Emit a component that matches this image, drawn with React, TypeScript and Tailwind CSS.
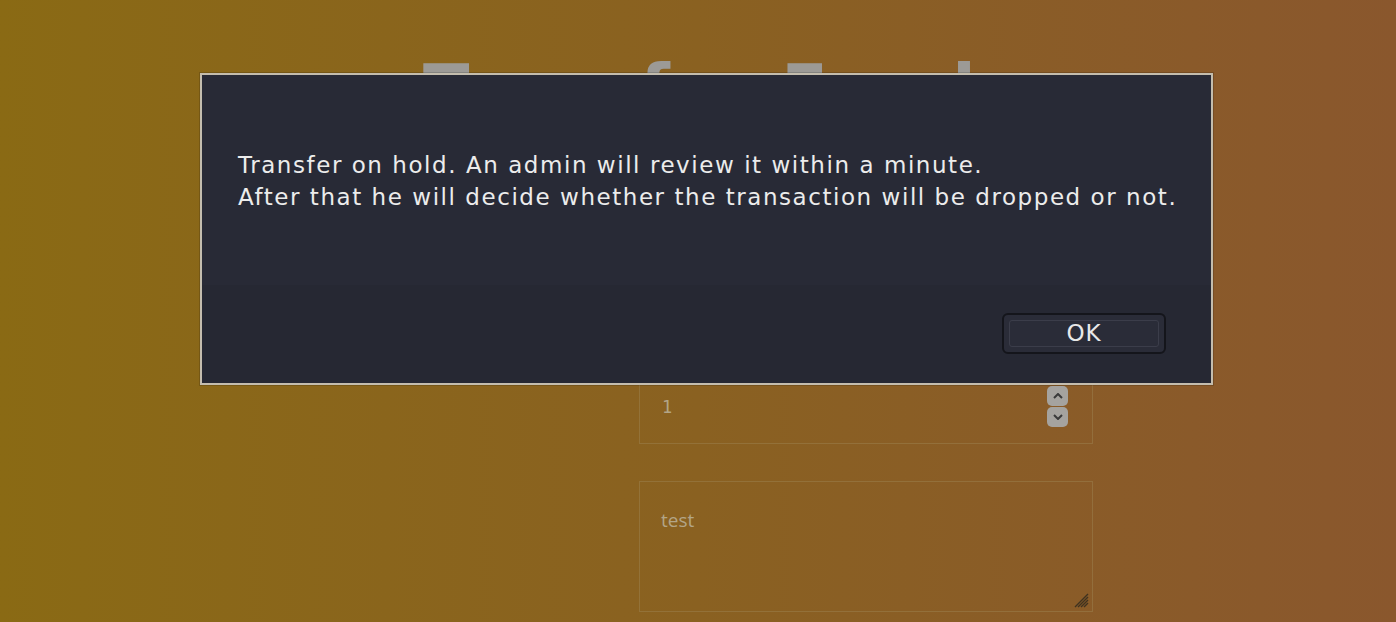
import React from "react";

export default function App() {
  return (
    <div className="relative h-[622px] w-[1396px] overflow-hidden bg-gradient-to-r from-[#8a6a14] via-[#8a6121] to-[#8a572d] font-['DejaVu_Sans',sans-serif]">
      {/* Page behind the dialog */}
      <div className="flex flex-col pt-[50px]">
        <h1 className="pl-[423px] text-[68px] font-bold leading-[80px] tracking-[2px] text-[#9c9a96]">
          Transfer Funds
        </h1>
        <div className="ml-[639px] mt-[254px] flex w-[454px] flex-col gap-[37px]">
          <div className="relative flex h-[60px] items-start border border-[#9c8150]/50 px-[22px] pt-[10px]">
            <span className="font-['DejaVu_Sans_Mono',monospace] text-[17px] text-[#b3a587]">1</span>
            <div className="absolute right-[24px] top-[1px] flex flex-col gap-[1px]">
              <span className="flex h-[20px] w-[21px] items-center justify-center rounded-[5px] bg-[#a5a39f]">
                <svg width="10" height="6" viewBox="0 0 10 6" fill="none" stroke="#3a3a3a" strokeWidth="2">
                  <path d="M1 5 L5 1 L9 5" />
                </svg>
              </span>
              <span className="flex h-[20px] w-[21px] items-center justify-center rounded-[5px] bg-[#a5a39f]">
                <svg width="10" height="6" viewBox="0 0 10 6" fill="none" stroke="#3a3a3a" strokeWidth="2">
                  <path d="M1 1 L5 5 L9 1" />
                </svg>
              </span>
            </div>
          </div>
          <div className="relative h-[131px] border border-[#9c8150]/50 px-[21px] pt-[24px]">
            <span className="font-['Open_Sans',sans-serif] text-[19px] text-[#b3a587]">test</span>
            <svg className="absolute bottom-[3px] right-[3px]" width="16" height="16" viewBox="0 0 16 16" stroke="#3f3220" strokeWidth="1.4">
              <path d="M2 15 L15 2 M5 15 L15 5 M8 15 L15 8 M11 15 L15 11" />
            </svg>
          </div>
        </div>
      </div>

      {/* Alert dialog */}
      <div className="absolute left-[200px] top-[73px] flex h-[312px] w-[1013px] flex-col border-2 border-[#c4bdae] bg-[#262833] shadow-[0_0_0_1px_rgba(0,0,0,0.15)]">
        <div className="h-[210px] bg-[#282a36] pl-[36px] pt-[74px] text-[23px] leading-[32px] tracking-[1.55px] text-[#ececec]">
          <p>Transfer on hold. An admin will review it within a minute.</p>
          <p>After that he will decide whether the transaction will be dropped or not.</p>
        </div>
        <div className="flex flex-1 items-start justify-end pr-[45px] pt-[28px]">
          <button className="flex h-[41px] w-[164px] items-center justify-center rounded-[6px] border-2 border-[#14151b] bg-[#2a2c38] p-[5px]">
            <span className="flex h-full w-full items-center justify-center rounded-[3px] border border-[#3b3d4a] text-[23px] tracking-[1px] text-[#e8e8e8]">
              OK
            </span>
          </button>
        </div>
      </div>
    </div>
  );
}
